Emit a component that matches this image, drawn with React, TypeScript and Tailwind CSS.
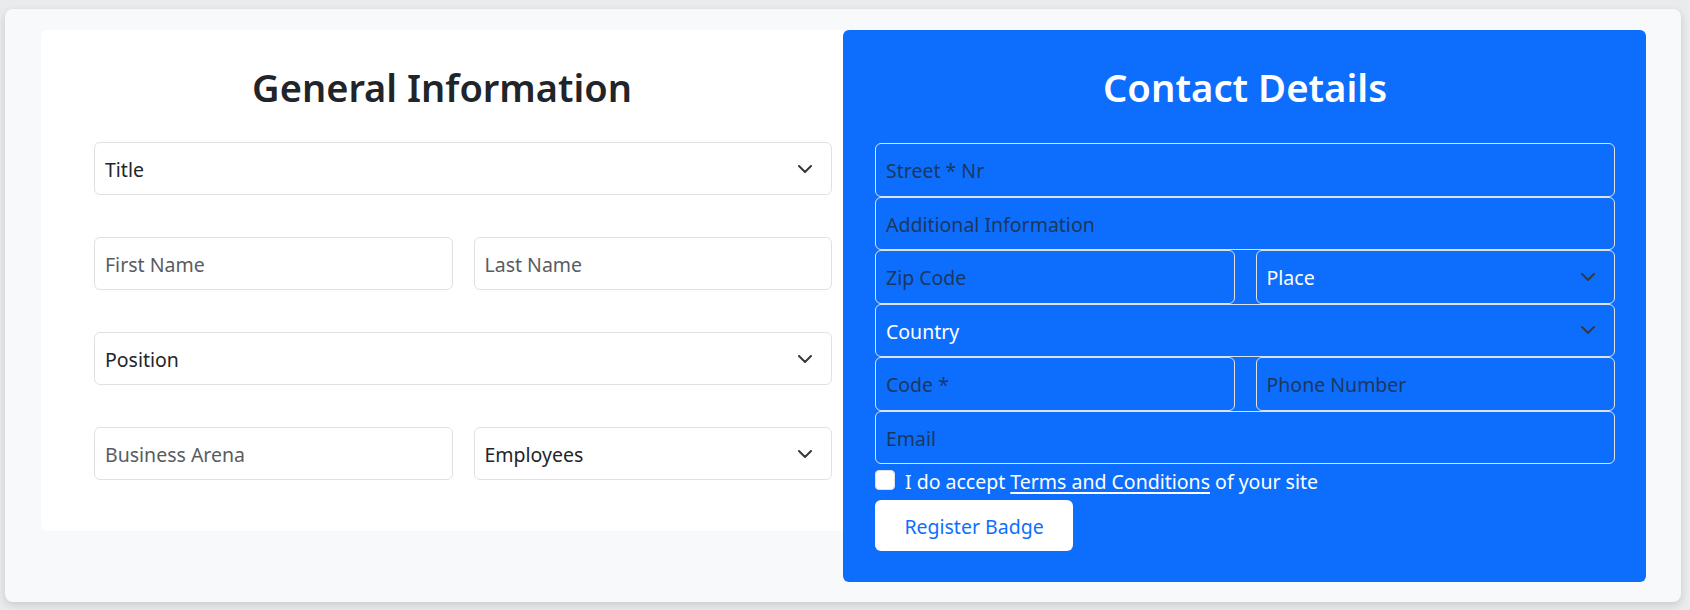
import React from "react";

const font = { fontFamily: '"Noto Sans", "Open Sans", Arial, sans-serif' };

function Chevron() {
  return (
    <svg width="14" height="8" viewBox="0 0 14 8" fill="none" aria-hidden className="shrink-0">
      <path d="M1 1l6 6 6-6" stroke="#343a40" strokeWidth="2" strokeLinecap="round" strokeLinejoin="round" />
    </svg>
  );
}

function Field({ placeholder, dark = false, className = "" }: { placeholder: string; dark?: boolean; className?: string }) {
  return (
    <input
      type="text"
      placeholder={placeholder}
      className={
        "w-full rounded-md border border-[#dee2e6] bg-transparent pl-[10px] pt-[2px] text-[19.5px] outline-none " +
        (dark ? "text-white placeholder:text-[#1c375e] " : "text-[#212529] placeholder:text-[#595c5f] ") +
        className
      }
    />
  );
}

function Select({ label, dark = false, className = "" }: { label: string; dark?: boolean; className?: string }) {
  return (
    <div
      className={
        "flex w-full items-center justify-between rounded-md border border-[#dee2e6] pl-[10px] pr-[19px] text-[19.5px] " +
        (dark ? "text-white " : "text-[#212529] ") +
        className
      }
    >
      <span className="pt-[2px]">{label}</span>
      <Chevron />
    </div>
  );
}

export default function App() {
  return (
    <div className="h-[610px] w-[1690px] bg-[#eaebed] pl-[5px] pt-[9px]" style={font}>
      <div className="flex h-[593px] w-[1676px] items-start rounded-lg bg-[#f8f9fa] pl-[36px] pt-[21px] shadow-[0_3px_8px_rgba(0,0,0,0.14)]">
        {/* general info */}
        <section className="h-[501px] w-[802px] rounded-l-md bg-white pl-[53px] pr-[11px] pt-[34px]">
          <h1 className="-ml-[42px] h-[46px] text-center text-[38px] font-semibold leading-[46px] text-[#212529]">
            General Information
          </h1>
          <div className="mt-[32px] flex flex-col gap-[42px]">
            <Select label="Title" className="h-[53px]" />
            <div className="grid grid-cols-2 gap-[21px]">
              <Field placeholder="First Name" className="h-[53px]" />
              <Field placeholder="Last Name" className="h-[53px]" />
            </div>
            <Select label="Position" className="h-[53px]" />
            <div className="grid grid-cols-2 gap-[21px]">
              <Field placeholder="Business Arena" className="h-[53px]" />
              <Select label="Employees" className="h-[53px]" />
            </div>
          </div>
        </section>

        {/* contact details */}
        <section className="h-[552px] w-[803px] rounded-md bg-[#0d6efd] pl-[32px] pr-[31px] pt-[34px]">
          <h1 className="h-[46px] text-center text-[38.3px] font-semibold leading-[46px] text-white">Contact Details</h1>
          <div className="mt-[33px] flex flex-col">
            <Field dark placeholder="Street * Nr" className="h-[53.5px]" />
            <Field dark placeholder="Additional Information" className="h-[53.5px]" />
            <div className="grid grid-cols-2 gap-[21px]">
              <Field dark placeholder="Zip Code" className="h-[53.5px]" />
              <Select dark label="Place" className="h-[53.5px]" />
            </div>
            <Select dark label="Country" className="h-[53.5px]" />
            <div className="grid grid-cols-2 gap-[21px]">
              <Field dark placeholder="Code *" className="h-[53.5px]" />
              <Field dark placeholder="Phone Number" className="h-[53.5px]" />
            </div>
            <Field dark placeholder="Email" className="h-[53.5px]" />
          </div>
          <label className="mt-[6px] flex h-[20px] items-center text-[19.5px] text-white">
            <input
              type="checkbox"
              className="h-[20px] w-[20px] shrink-0 appearance-none rounded-[4px] border border-[#dee2e6] bg-white"
            />
            <span className="ml-[10px] pt-[3px] leading-none">
              I do accept{" "}
              <a href="#" className="underline decoration-[1.5px] underline-offset-[3px]">
                Terms and Conditions
              </a>{" "}
              of your site
            </span>
          </label>
          <button
            type="button"
            className="mt-[10px] h-[51px] w-[198px] rounded-md bg-white pt-[3px] text-[19.5px] text-[#0d6efd]"
          >
            Register Badge
          </button>
        </section>
      </div>
    </div>
  );
}
